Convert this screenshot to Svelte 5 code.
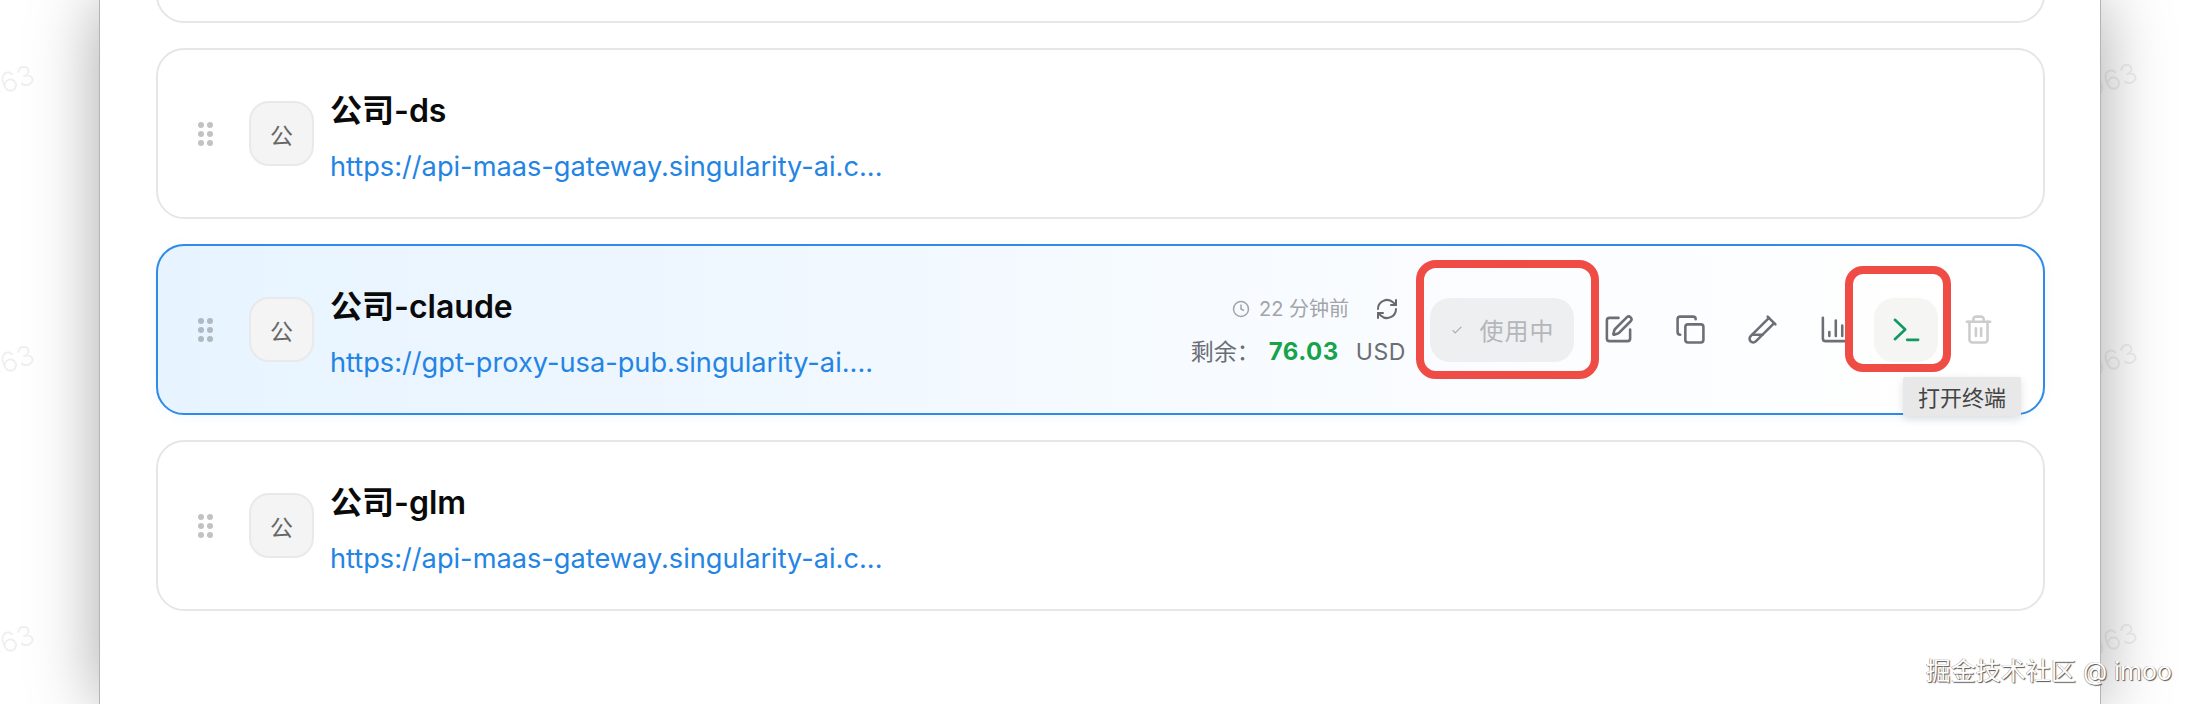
<script>
  const cards = [
    { name: "公司-x", url: "https://api-maas-gateway.singularity-ai.c..." },
    { name: "公司-ds", url: "https://api-maas-gateway.singularity-ai.c..." },
    { name: "公司-claude", url: "https://gpt-proxy-usa-pub.singularity-ai....", active: true },
    { name: "公司-glm", url: "https://api-maas-gateway.singularity-ai.c..." },
  ];
  const marks = [
    { x: -17, y: 65 }, { x: -17, y: 345 }, { x: -17, y: 625 },
    { x: 2086, y: 63 }, { x: 2086, y: 343 }, { x: 2086, y: 623 },
  ];
</script>

<div class="page">
  {#each marks as m}
    <span class="mark" style="left:{m.x}px;top:{m.y}px">963</span>
  {/each}

  <div class="modal">
    {#each cards as card}
      <div class="card" class:active={card.active}>
        <div class="handle">
          {#each Array(6) as _}<i></i>{/each}
        </div>
        <div class="avatar">公</div>
        <div class="info">
          <div class="name">{card.name}</div>
          <div class="url">{card.url}</div>
        </div>

        {#if card.active}
          <div class="meta">
            <div class="time">
              <svg class="clock" viewBox="0 0 24 24"><circle cx="12" cy="12" r="10" /><path d="M12 6v6l4 2" /></svg>
              <span>22 分钟前</span>
              <svg class="refresh" viewBox="0 0 24 24">
                <path d="M3 12a9 9 0 0 1 15-6.7L21 8" /><path d="M21 3v5h-5" />
                <path d="M21 12a9 9 0 0 1-15 6.7L3 16" /><path d="M3 21v-5h5" />
              </svg>
            </div>
            <div class="balance">
              <span>剩余：</span><b>76.03</b><span class="unit">USD</span>
            </div>
          </div>
          <div class="actions">
            <button class="use">
              <svg viewBox="0 0 24 24"><path d="M5 13l4 4 10-10" /></svg>
              使用中
            </button>
            <button class="icon">
              <svg viewBox="0 0 24 24">
                <path d="M12 3H5a2 2 0 0 0-2 2v14a2 2 0 0 0 2 2h14a2 2 0 0 0 2-2v-7" />
                <path d="M18.375 2.625a1 1 0 0 1 3 3l-9.013 9.014a2 2 0 0 1-.853.505l-2.873.84a.5.5 0 0 1-.62-.62l.84-2.873a2 2 0 0 1 .506-.852z" />
              </svg>
            </button>
            <button class="icon">
              <svg viewBox="0 0 24 24">
                <rect x="8" y="8" width="14" height="14" rx="2" />
                <path d="M4 16c-1.1 0-2-.9-2-2V4c0-1.100.9-2 2-2h10c1.100 0 2 .9 2 2" />
              </svg>
            </button>
            <button class="icon">
              <svg viewBox="0 0 24 24">
                <path d="M21 7 6.820 21.180a2.830 2.830 0 0 1-3.990-.01a2.830 2.830 0 0 1 0-4L17 3" />
                <path d="m16 2 6 6" /><path d="M12 16H4" />
              </svg>
            </button>
            <button class="icon">
              <svg viewBox="0 0 24 24">
                <path d="M3 3v16a2 2 0 0 0 2 2h16" /><path d="M18 17V9" /><path d="M13 17V5" /><path d="M8 17v-3" />
              </svg>
            </button>
            <button class="icon term">
              <svg viewBox="0 0 24 24"><path d="M3 4.500l8 7.500-8 7.500" /><path d="M12.500 20h8.500" /></svg>
              <span class="tip">打开终端</span>
            </button>
            <button class="icon trash">
              <svg viewBox="0 0 24 24">
                <path d="M3 6h18" /><path d="M19 6v14c0 1-1 2-2 2H7c-1 0-2-1-2-2V6" />
                <path d="M8 6V4c0-1 1-2 2-2h4c1 0 2 1 2 2v2" /><path d="M10 11v6" /><path d="M14 11v6" />
              </svg>
            </button>
          </div>
        {/if}
      </div>
    {/each}
  </div>

  <div class="credit">掘金技术社区 @ imoo</div>
</div>

<style>
  :global(body) {
    margin: 0;
    background: #fff;
  }

  .page {
    position: relative;
    width: 2192px;
    height: 704px;
    overflow: hidden;
    background: #fff;
    font-family: Inter, "Noto Sans CJK SC", sans-serif;
  }

  .mark {
    position: absolute;
    font-size: 28px;
    color: rgba(0, 0, 0, 0.06);
    transform: rotate(-20deg);
  }

  .modal {
    position: relative;
    box-sizing: border-box;
    width: 2002px;
    height: 704px;
    margin-left: 99px;
    padding: 0 55px 93px 56px;
    display: flex;
    flex-direction: column;
    justify-content: flex-end;
    gap: 25px;
    background: #fff;
    border-left: 1px solid #b4b4b4;
    border-right: 1px solid #b4b4b4;
    box-shadow: 0 0 64px rgba(0, 0, 0, 0.34);
  }

  .card {
    flex: none;
    box-sizing: border-box;
    height: 171px;
    padding: 0 33px 0 40px;
    display: flex;
    align-items: center;
    background: #fff;
    border: 2px solid #e6e6e6;
    border-radius: 28px;
  }

  .card.active {
    background: linear-gradient(90deg, #e7f4ff 0%, #edf6ff 25%, #f5faff 50%, #fcfdff 75%, #fff 100%);
    border-color: #2f8ae8;
    box-shadow: 0 2px 12px rgba(47, 138, 232, 0.06);
  }

  .handle {
    flex: none;
    width: 15px;
    display: grid;
    grid-template-columns: 6px 6px;
    gap: 3px;
    margin-right: 36px;
  }

  .handle i {
    width: 6px;
    height: 6px;
    border-radius: 50%;
    background: #c2c2c2;
  }

  .active .handle i {
    background: #b0b8c0;
  }

  .avatar {
    flex: none;
    box-sizing: border-box;
    width: 65px;
    height: 65px;
    margin-right: 16px;
    display: flex;
    align-items: center;
    justify-content: center;
    background: #f4f4f4;
    border: 2px solid #e9e9e9;
    border-radius: 20px;
    font-size: 23px;
    color: #666;
  }

  .info {
    flex: 1;
    min-width: 0;
    align-self: flex-start;
    padding-top: 41px;
  }

  .name {
    font-size: 32px;
    line-height: 40px;
    font-weight: 600;
    color: #0a0a0a;
  }

  .url {
    margin-top: 18px;
    font-size: 27.2px;
    line-height: 36px;
    color: #2384e4;
    white-space: nowrap;
  }

  .meta {
    flex: none;
    margin-right: 24px;
    padding-top: 3px;
    display: flex;
    flex-direction: column;
    align-items: flex-end;
    gap: 14px;
  }

  .time {
    display: flex;
    align-items: center;
    font-size: 20px;
    line-height: 28px;
    color: #a2a4a8;
  }

  .clock {
    width: 18px;
    height: 18px;
    margin-right: 9px;
    fill: none;
    stroke: #a2a4a8;
    stroke-width: 2;
  }

  .refresh {
    width: 24px;
    height: 24px;
    margin-left: 26px;
    margin-right: 7px;
    fill: none;
    stroke: #666a70;
    stroke-width: 2;
    stroke-linecap: round;
    stroke-linejoin: round;
  }

  .balance {
    display: flex;
    align-items: baseline;
    font-size: 23px;
    line-height: 30px;
    color: #6a6d72;
  }

  .balance b {
    margin: 0 17px 0 9px;
    font-size: 24px;
    font-weight: 700;
    color: #16a34a;
    letter-spacing: 0.5px;
  }

  .unit {
    letter-spacing: 0.6px;
  }

  .actions {
    flex: none;
    display: flex;
    align-items: center;
    gap: 8px;
  }

  button {
    position: relative;
    box-sizing: border-box;
    height: 64px;
    padding: 0;
    display: flex;
    align-items: center;
    justify-content: center;
    background: none;
    border: none;
    font-family: inherit;
  }

  button svg {
    fill: none;
    stroke: #6c7076;
    stroke-width: 2;
    stroke-linecap: round;
    stroke-linejoin: round;
  }

  .use {
    width: 144px;
    margin-right: 4px;
    gap: 16px;
    background: #eeeff1;
    border-radius: 20px;
    font-size: 24px;
    letter-spacing: 1px;
    color: #b4b6ba;
  }

  .use svg {
    width: 14px;
    height: 14px;
    stroke: #a8aaae;
  }

  .use::after,
  .term::after {
    content: "";
    position: absolute;
    z-index: 2;
    border: 8px solid #ef4c45;
    box-sizing: border-box;
    pointer-events: none;
  }

  .use::after {
    inset: -38px -25px -17px -14px;
    border-radius: 20px;
  }

  .term::after {
    inset: -32px -13px -10px -29px;
    border-radius: 18px;
  }

  .icon {
    width: 64px;
  }

  .icon svg {
    width: 31px;
    height: 31px;
  }

  .term {
    background: #f5f5f4;
    border-radius: 20px;
  }

  .term svg {
    stroke: #0e9a63;
  }

  .trash svg {
    stroke: #cdcdcd;
  }

  .tip {
    position: absolute;
    z-index: 3;
    top: 79px;
    left: 29px;
    width: 118px;
    height: 39px;
    display: flex;
    align-items: center;
    justify-content: center;
    background: #e8e8e8;
    border-radius: 2px;
    font-size: 22px;
    color: #444;
    box-shadow: 0 3px 8px rgba(0, 0, 0, 0.12);
  }

  .credit {
    position: absolute;
    right: 20px;
    bottom: 18px;
    font-size: 25px;
    line-height: 30px;
    color: #fff;
    text-shadow: 1px 1px 1px #555, -0.5px -0.5px 0.5px #888;
  }
</style>
